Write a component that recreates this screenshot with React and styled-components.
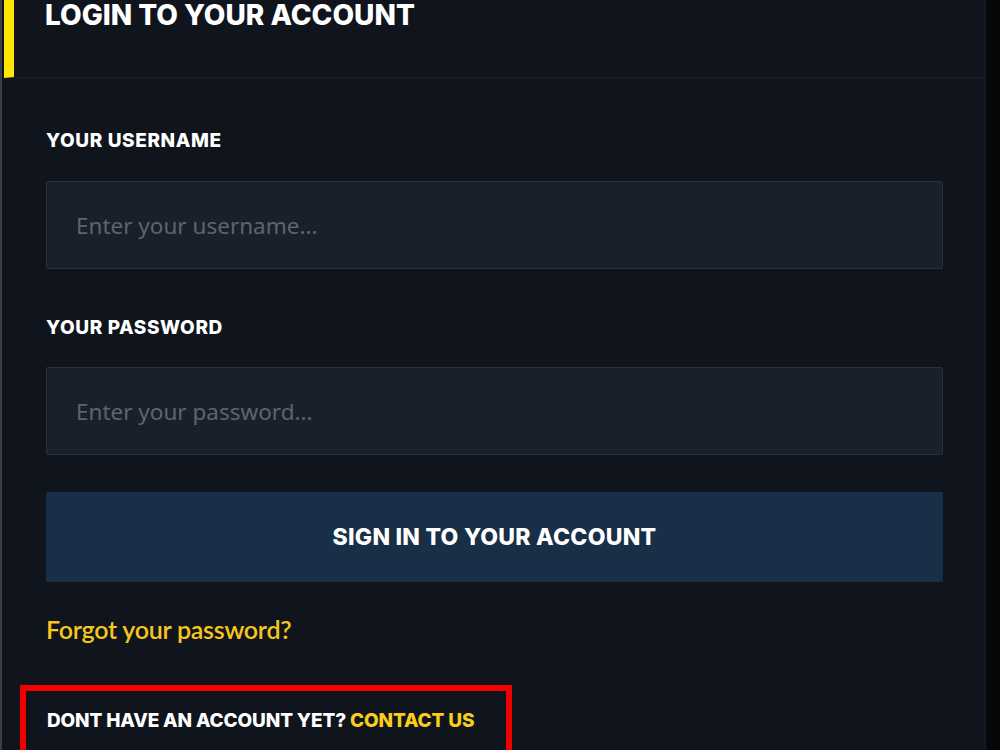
import styled, { createGlobalStyle } from "styled-components";

const GlobalStyle = createGlobalStyle`
  html, body {
    margin: 0;
    padding: 0;
    background: #06080c;
  }
  * {
    box-sizing: border-box;
  }
`;

const Page = styled.div`
  display: flex;
  width: 1000px;
  height: 750px;
  overflow: hidden;
  background: #06080c;
`;

const Panel = styled.div`
  flex: 1;
  display: flex;
  flex-direction: column;
  background: #0f141d;
  border-left: 2px solid #3a3f47;
  border-right: 1px solid #161b24;

  & > * {
    flex-shrink: 0;
  }
`;

const SideStrip = styled.div`
  width: 14px;
  flex-shrink: 0;
  background: #05070a;
`;

const Header = styled.div`
  height: 78px;
  display: flex;
  align-items: flex-start;
  padding: 0 0 0 31px;
  margin-left: 2px;
  border-left: 10px solid #ffe600;
  border-bottom: 1px solid #1a2029;
`;

const Title = styled.h1`
  margin: 0;
  padding-top: 2px;
  font-family: Inter, "Open Sans", sans-serif;
  font-weight: 800;
  font-size: 28px;
  line-height: 26px;
  color: #ffffff;
  text-transform: uppercase;
`;

const Body = styled.div`
  display: flex;
  flex-direction: column;
  padding: 0 42px 0 44px;

  & > * {
    flex-shrink: 0;
  }
`;

const Label = styled.label`
  display: block;
  margin-top: ${(p) => p.$top}px;
  font-family: Inter, "Open Sans", sans-serif;
  font-weight: 800;
  font-size: 19px;
  line-height: 24px;
  letter-spacing: 0.6px;
  color: #ffffff;
  text-transform: uppercase;
`;

const Input = styled.input`
  display: block;
  width: 100%;
  height: 88px;
  margin-top: ${(p) => p.$top}px;
  padding: 0 29px;
  background: #1a202a;
  border: 1px solid #2a303a;
  border-radius: 2px;
  outline: none;
  font-family: "Noto Sans", "Open Sans", sans-serif;
  font-size: 22.5px;
  color: #c9ced6;

  &::placeholder {
    color: #5d6470;
  }
`;

const SubmitButton = styled.button`
  display: block;
  width: 100%;
  height: 90px;
  margin-top: 37px;
  background: #192f47;
  border: none;
  border-radius: 2px;
  font-family: Inter, "Open Sans", sans-serif;
  font-weight: 800;
  font-size: 23px;
  letter-spacing: 0.25px;
  color: #ffffff;
  text-transform: uppercase;
  cursor: pointer;
`;

const ForgotLink = styled.a`
  display: block;
  margin-top: 31px;
  font-family: Lato, "Noto Sans", sans-serif;
  font-weight: 600;
  font-size: 25px;
  line-height: 32px;
  letter-spacing: -0.25px;
  color: #f7c51c;
  text-decoration: none;
  cursor: pointer;
`;

const Highlight = styled.div`
  align-self: flex-start;
  margin: 40px 0 0 -26px;
  padding: 18px 32px 24px 21px;
  border: 6px solid #f20000;
  font-family: Inter, "Open Sans", sans-serif;
  font-weight: 800;
  font-size: 19px;
  line-height: 24px;
  letter-spacing: -0.15px;
  color: #ffffff;
  text-transform: uppercase;
`;

const ContactLink = styled.a`
  color: #f8cf16;
  text-decoration: none;
  cursor: pointer;
`;

export default function App() {
  return (
    <>
      <GlobalStyle />
      <Page>
        <Panel>
          <Header>
            <Title>Login to your account</Title>
          </Header>
          <Body>
            <Label $top={51}>Your username</Label>
            <Input $top={28} placeholder="Enter your username..." />
            <Label $top={47}>Your password</Label>
            <Input $top={27} type="password" placeholder="Enter your password..." />
            <SubmitButton>Sign in to your account</SubmitButton>
            <ForgotLink>Forgot your password?</ForgotLink>
            <Highlight>
              Dont have an account yet? <ContactLink>Contact us</ContactLink>
            </Highlight>
          </Body>
        </Panel>
        <SideStrip />
      </Page>
    </>
  );
}
